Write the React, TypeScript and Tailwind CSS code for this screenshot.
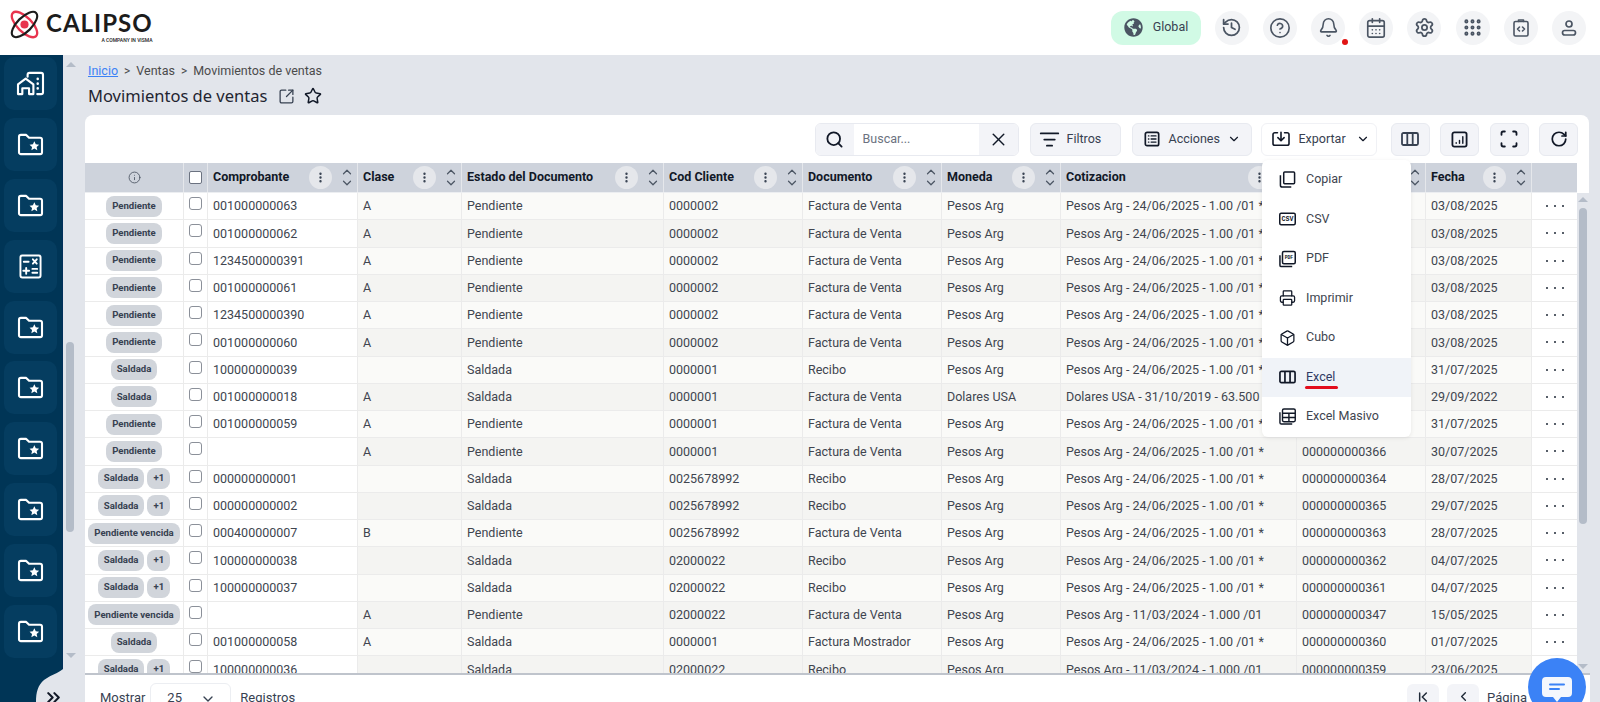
import { ReactNode } from "react";
import {
  Box,
  Bell,
  CalendarDays,
  ChevronDown,
  ChevronFirst,
  ChevronLeft,
  ChevronsRight,
  ChevronUp,
  CircleHelp,
  EllipsisVertical,
  Grip,
  History,
  Info,
  ListFilter,
  Printer,
  RotateCw,
  Scan,
  Search,
  Settings,
  SquareArrowOutUpRight,
  Star,
  X,
} from "lucide-react";
import { FaGlobeAmericas } from "react-icons/fa";

const FONT = "font-['Roboto','Liberation_Sans',sans-serif]";

interface Row {
  estados: string[];
  comprobante: string;
  clase: string;
  estado: string;
  cliente: string;
  documento: string;
  moneda: string;
  cotizacion: string;
  numero: string;
  fecha: string;
}

const PESOS = "Pesos Arg - 24/06/2025 - 1.00 /01 *";
const PESOS_2024 = "Pesos Arg - 11/03/2024 - 1.000 /01";
const FV = "Factura de Venta";

// la columna numero de las primeras filas queda tapada por el menu de exportar
const ROWS: Row[] = [
  { estados: ["Pendiente"], comprobante: "001000000063", clase: "A", estado: "Pendiente", cliente: "0000002", documento: FV, moneda: "Pesos Arg", cotizacion: PESOS, numero: "", fecha: "03/08/2025" },
  { estados: ["Pendiente"], comprobante: "001000000062", clase: "A", estado: "Pendiente", cliente: "0000002", documento: FV, moneda: "Pesos Arg", cotizacion: PESOS, numero: "", fecha: "03/08/2025" },
  { estados: ["Pendiente"], comprobante: "1234500000391", clase: "A", estado: "Pendiente", cliente: "0000002", documento: FV, moneda: "Pesos Arg", cotizacion: PESOS, numero: "", fecha: "03/08/2025" },
  { estados: ["Pendiente"], comprobante: "001000000061", clase: "A", estado: "Pendiente", cliente: "0000002", documento: FV, moneda: "Pesos Arg", cotizacion: PESOS, numero: "", fecha: "03/08/2025" },
  { estados: ["Pendiente"], comprobante: "1234500000390", clase: "A", estado: "Pendiente", cliente: "0000002", documento: FV, moneda: "Pesos Arg", cotizacion: PESOS, numero: "", fecha: "03/08/2025" },
  { estados: ["Pendiente"], comprobante: "001000000060", clase: "A", estado: "Pendiente", cliente: "0000002", documento: FV, moneda: "Pesos Arg", cotizacion: PESOS, numero: "", fecha: "03/08/2025" },
  { estados: ["Saldada"], comprobante: "100000000039", clase: "", estado: "Saldada", cliente: "0000001", documento: "Recibo", moneda: "Pesos Arg", cotizacion: PESOS, numero: "", fecha: "31/07/2025" },
  { estados: ["Saldada"], comprobante: "001000000018", clase: "A", estado: "Saldada", cliente: "0000001", documento: FV, moneda: "Dolares USA", cotizacion: "Dolares USA - 31/10/2019 - 63.500 /01 *", numero: "", fecha: "29/09/2022" },
  { estados: ["Pendiente"], comprobante: "001000000059", clase: "A", estado: "Pendiente", cliente: "0000001", documento: FV, moneda: "Pesos Arg", cotizacion: PESOS, numero: "", fecha: "31/07/2025" },
  { estados: ["Pendiente"], comprobante: "", clase: "A", estado: "Pendiente", cliente: "0000001", documento: FV, moneda: "Pesos Arg", cotizacion: PESOS, numero: "000000000366", fecha: "30/07/2025" },
  { estados: ["Saldada", "+1"], comprobante: "000000000001", clase: "", estado: "Saldada", cliente: "0025678992", documento: "Recibo", moneda: "Pesos Arg", cotizacion: PESOS, numero: "000000000364", fecha: "28/07/2025" },
  { estados: ["Saldada", "+1"], comprobante: "000000000002", clase: "", estado: "Saldada", cliente: "0025678992", documento: "Recibo", moneda: "Pesos Arg", cotizacion: PESOS, numero: "000000000365", fecha: "29/07/2025" },
  { estados: ["Pendiente vencida"], comprobante: "000400000007", clase: "B", estado: "Pendiente", cliente: "0025678992", documento: FV, moneda: "Pesos Arg", cotizacion: PESOS, numero: "000000000363", fecha: "28/07/2025" },
  { estados: ["Saldada", "+1"], comprobante: "100000000038", clase: "", estado: "Saldada", cliente: "02000022", documento: "Recibo", moneda: "Pesos Arg", cotizacion: PESOS, numero: "000000000362", fecha: "04/07/2025" },
  { estados: ["Saldada", "+1"], comprobante: "100000000037", clase: "", estado: "Saldada", cliente: "02000022", documento: "Recibo", moneda: "Pesos Arg", cotizacion: PESOS, numero: "000000000361", fecha: "04/07/2025" },
  { estados: ["Pendiente vencida"], comprobante: "", clase: "A", estado: "Pendiente", cliente: "02000022", documento: FV, moneda: "Pesos Arg", cotizacion: PESOS_2024, numero: "000000000347", fecha: "15/05/2025" },
  { estados: ["Saldada"], comprobante: "001000000058", clase: "A", estado: "Saldada", cliente: "0000001", documento: "Factura Mostrador", moneda: "Pesos Arg", cotizacion: PESOS, numero: "000000000360", fecha: "01/07/2025" },
  { estados: ["Saldada", "+1"], comprobante: "100000000036", clase: "", estado: "Saldada", cliente: "02000022", documento: "Recibo", moneda: "Pesos Arg", cotizacion: PESOS_2024, numero: "000000000359", fecha: "23/06/2025" },
];

function Logo() {
  return (
    <div className="flex items-start pl-[10px]">
      <svg viewBox="0 0 30 30" className="w-[29px] h-[29px] mt-[-1px]" fill="none">
        <ellipse cx="15" cy="15" rx="17" ry="7.5" transform="rotate(45 15 15)" stroke="#e8344e" strokeWidth="2.4" />
        <ellipse cx="15" cy="15" rx="17" ry="7.5" transform="rotate(-45 15 15)" stroke="#1c1c1c" strokeWidth="2.2" />
        <circle cx="15" cy="15" r="4.2" fill="#e8344e" />
      </svg>
      <div className="ml-[7px] flex flex-col items-end">
        <span className="font-['Lato',sans-serif] font-bold text-[24px] leading-[24px] tracking-[1px] text-[#1c1c1c]">CALIPSO</span>
        <span className="font-['Roboto',sans-serif] text-[5px] leading-[7px] font-medium text-[#222] mt-[2px]">A COMPANY IN VISMA</span>
      </div>
    </div>
  );
}

function RoundBtn({ children, dot }: { children: ReactNode; dot?: boolean }) {
  return (
    <div className="relative w-[34px] h-[34px] rounded-full bg-[#f3f4f6] flex items-center justify-center text-[#4b5563]">
      {children}
      {dot && <span className="absolute right-[-3px] bottom-0 w-[6px] h-[6px] rounded-full bg-[#e11414]" />}
    </div>
  );
}

function Header() {
  return (
    <header className="h-[55px] shrink-0 bg-white flex items-center justify-between pr-[14px]">
      <Logo />
      <div className="flex items-center">
        <div className="w-[90px] h-[34px] rounded-xl bg-[#d1fae5] flex items-center pl-[13px] gap-[10px] text-[12.5px] text-[#374151] mr-[14px]">
          <FaGlobeAmericas className="w-[19px] h-[19px] text-[#4b5563]" />
          Global
        </div>
        <div className="flex gap-[14.2px]">
          <RoundBtn><History className="w-[21px] h-[21px]" strokeWidth={2} /></RoundBtn>
          <RoundBtn><CircleHelp className="w-[22px] h-[22px]" strokeWidth={1.8} /></RoundBtn>
          <RoundBtn dot><Bell className="w-[21px] h-[21px]" strokeWidth={1.8} /></RoundBtn>
          <RoundBtn><CalendarDays className="w-[22px] h-[22px]" strokeWidth={1.8} /></RoundBtn>
          <RoundBtn><Settings className="w-[21px] h-[21px]" strokeWidth={2} /></RoundBtn>
          <RoundBtn>
            <Grip className="w-[21px] h-[21px]" strokeWidth={2.6} />
          </RoundBtn>
          <RoundBtn>
            <svg viewBox="0 0 20 20" className="w-[20px] h-[20px]" fill="none" stroke="currentColor" strokeWidth="1.6" strokeLinejoin="round" strokeLinecap="round">
              <rect x="3" y="3.5" width="14" height="14.5" rx="1.5" />
              <path d="M7.5 3.5V2h5v1.5M8.5 9l-2 2 2 2M11.5 9l2 2-2 2" />
            </svg>
          </RoundBtn>
          <RoundBtn>
            <svg viewBox="0 0 20 20" className="w-[20px] h-[20px]" fill="none" stroke="currentColor" strokeWidth="1.7">
              <circle cx="10" cy="6" r="3" />
              <rect x="3.5" y="12.5" width="13" height="4.5" rx="2.25" />
            </svg>
          </RoundBtn>
        </div>
      </div>
    </header>
  );
}

function FolderStar() {
  return (
    <svg viewBox="0 0 28 24" className="w-[27px] h-[23px]" fill="none" stroke="white" strokeWidth="2.2" strokeLinejoin="round">
      <path d="M2 4a2 2 0 0 1 2-2h5.5l3 3H24a2 2 0 0 1 2 2v13a2 2 0 0 1-2 2H4a2 2 0 0 1-2-2z" />
      <path d="M18 8.500l1.500 3.300 3.500.4-2.600 2.400.7 3.500-3.100-1.800-3.100 1.800.7-3.500-2.600-2.400 3.500-.4z" fill="white" stroke="none" />
    </svg>
  );
}

function HomeIcon() {
  return (
    <svg viewBox="0 0 30 26" className="w-[29px] h-[25px]" fill="none" stroke="white" strokeWidth="2.2" strokeLinecap="round" strokeLinejoin="round">
      <path d="M2 24V14l8-6 8 6v10h-4.500v-6h-7v6z" />
      <path d="M12 6V4a2 2 0 0 1 2-2h12a2 2 0 0 1 2 2v18a2 2 0 0 1-2 2h-4" />
      <path d="M22.500 8v.2M22.500 13v.2M22.500 18v.2" strokeWidth="2.600" />
    </svg>
  );
}

function CalcIcon() {
  return (
    <svg viewBox="0 0 24 26" className="w-[23px] h-[25px]" fill="none" stroke="white" strokeWidth="2" strokeLinecap="round">
      <rect x="1.500" y="1.500" width="21" height="23" rx="2" />
      <path d="M5 8h5M14.500 5.500l4 4.500M18.500 5.500l-4 4.500M7.500 14.500v6M4.500 17.500h6M14 15.500h5M14 19.500h5" />
    </svg>
  );
}

function Tile({ children }: { children: ReactNode }) {
  return <div className="w-[53px] h-[53px] shrink-0 rounded-[10px] bg-[#053d60] flex items-center justify-center">{children}</div>;
}

function Sidebar() {
  return (
    <aside className="w-[63px] shrink-0 bg-[#003556] border-r-[1px] border-[#02305a] flex flex-col gap-[7.900px] items-center pt-[2px] pr-[1px] overflow-hidden">
      <Tile><HomeIcon /></Tile>
      <Tile><FolderStar /></Tile>
      <Tile><FolderStar /></Tile>
      <Tile><CalcIcon /></Tile>
      <Tile><FolderStar /></Tile>
      <Tile><FolderStar /></Tile>
      <Tile><FolderStar /></Tile>
      <Tile><FolderStar /></Tile>
      <Tile><FolderStar /></Tile>
      <Tile><FolderStar /></Tile>
    </aside>
  );
}

function ToolBtn({ className, children }: { className: string; children: ReactNode }) {
  return (
    <div className={`h-[33px] rounded-md border border-[#e8eaf0] bg-[#f3f4f8] flex items-center text-[12.5px] text-[#374151] ${className}`}>
      {children}
    </div>
  );
}

function ListIcon() {
  return (
    <svg viewBox="0 0 18 18" className="w-[16px] h-[16px]" fill="none" stroke="#111827" strokeWidth="1.900" strokeLinecap="round">
      <rect x="1.500" y="1.500" width="15" height="15" rx="2" />
      <path d="M5 5.500h.5M8 5.500h5.500M5 9h.5M8 9h5.500M5 12.500h.5M8 12.500h5.500" strokeWidth="1.500" />
    </svg>
  );
}

function ExportIcon() {
  return (
    <svg viewBox="0 0 20 18" className="w-[18px] h-[16px]" fill="none" stroke="#111827" strokeWidth="1.800" strokeLinecap="round" strokeLinejoin="round">
      <path d="M6 2H3a2 2 0 0 0-2 2v10a2 2 0 0 0 2 2h14a2 2 0 0 0 2-2V4a2 2 0 0 0-2-2h-3" />
      <path d="M10 1.500v9M6.500 7.500l3.500 3.500 3.500-3.500" />
    </svg>
  );
}

function ColumnsIcon() {
  return (
    <svg viewBox="0 0 18 14" className="w-[18px] h-[14px]" fill="none" stroke="currentColor" strokeWidth="1.800" strokeLinejoin="round">
      <rect x="1" y="1" width="16" height="12" rx="1.500" />
      <path d="M6.300 1v12M11.700 1v12" />
    </svg>
  );
}

function Toolbar() {
  return (
    <div className="h-[48px] shrink-0 flex items-center justify-end pr-[11px] text-[#111827]">
      <div className="flex items-center h-[33px] w-[204px] rounded-md border border-[#e8eaf0] overflow-hidden mr-[11px]">
        <div className="w-[38px] h-full bg-[#f3f4f8] flex items-center justify-center">
          <Search className="w-[19px] h-[19px]" strokeWidth={2.3} />
        </div>
        <div className="flex-1 pl-[9px] text-[12.5px] text-[#6b7280]">Buscar...</div>
        <div className="w-[39px] h-full bg-[#f3f4f8] flex items-center justify-center">
          <X className="w-[21px] h-[21px]" strokeWidth={1.700} />
        </div>
      </div>
      <ToolBtn className="w-[91px] pl-[8px] gap-[7px] mr-[11px]">
        <ListFilter className="w-[21px] h-[21px] text-[#111827]" strokeWidth={2} />
        Filtros
      </ToolBtn>
      <ToolBtn className="w-[120px] pl-[11px] gap-[9px] mr-[9px]">
        <ListIcon />
        Acciones
        <ChevronDown className="w-[14px] h-[14px] -ml-[2px] text-[#111827]" strokeWidth={2} />
      </ToolBtn>
      <div className="h-[33px] w-[116px] rounded-md border border-[#f0f1f5] bg-white flex items-center pl-[10px] gap-[9px] text-[12.5px] text-[#374151] mr-[14px]">
        <ExportIcon />
        Exportar
        <ChevronDown className="w-[14px] h-[14px] ml-[1px] text-[#111827]" strokeWidth={2} />
      </div>
      <div className="flex gap-[10.500px]">
        <ToolBtn className="w-[39px] justify-center text-[#111827]"><ColumnsIcon /></ToolBtn>
        <ToolBtn className="w-[39px] justify-center">
          <svg viewBox="0 0 18 18" className="w-[17px] h-[17px]" fill="none" stroke="#111827" strokeWidth="1.900" strokeLinecap="round">
            <rect x="1.500" y="1.500" width="15" height="15" rx="2" />
            <path d="M5.500 13v-.5M9 13v-3M12.500 13V6" strokeWidth="1.500" />
          </svg>
        </ToolBtn>
        <ToolBtn className="w-[39px] justify-center"><Scan className="w-[20px] h-[20px] text-[#111827]" strokeWidth={2.200} /></ToolBtn>
        <ToolBtn className="w-[39px] justify-center"><RotateCw className="w-[18px] h-[18px] text-[#111827]" strokeWidth={2.300} /></ToolBtn>
      </div>
    </div>
  );
}

function HeadCell({ title, className }: { title: string; className: string }) {
  return (
    <div className={`h-full flex items-center pl-[5px] pr-[3px] border-r border-[#e5e7eb] text-[12.5px] font-bold text-[#111827] ${className}`}>
      <span className="flex-1 truncate">{title}</span>
      <span className="w-[23px] h-[23px] rounded-full bg-[#e5e7eb] flex items-center justify-center mr-[8px] shrink-0">
        <EllipsisVertical className="w-[13px] h-[13px] text-[#374151]" strokeWidth={2.400} />
      </span>
      <span className="flex flex-col items-center text-[#4b5563] shrink-0">
        <ChevronUp className="w-[14px] h-[14px] -mb-[3px]" strokeWidth={2.100} />
        <ChevronDown className="w-[14px] h-[14px]" strokeWidth={2.100} />
      </span>
    </div>
  );
}

function TableHead() {
  return (
    <div className="flex h-[30px] shrink-0 mr-[12px] bg-[#ced3dc] border-b border-[#eceef1]">
      <div className="w-[99px] h-full border-r border-[#e5e7eb] flex items-center justify-center">
        <Info className="w-[13px] h-[13px] text-[#4b5563]" strokeWidth={1.600} />
      </div>
      <div className="w-[24px] h-full border-r border-[#e5e7eb] flex items-center justify-center">
        <span className="w-[13px] h-[13px] rounded-[2px] border border-[#6b7280] bg-white" />
      </div>
      <HeadCell title="Comprobante" className="w-[150px]" />
      <HeadCell title="Clase" className="w-[104px]" />
      <HeadCell title="Estado del Documento" className="w-[202px]" />
      <HeadCell title="Cod Cliente" className="w-[139px]" />
      <HeadCell title="Documento" className="w-[139px]" />
      <HeadCell title="Moneda" className="w-[119px]" />
      <HeadCell title="Cotizacion" className="w-[236px]" />
      <HeadCell title="" className="w-[129px]" />
      <HeadCell title="Fecha" className="w-[106px]" />
      <div className="flex-1" />
    </div>
  );
}

function Badge({ text }: { text: string }) {
  return (
    <span className="h-[21px] rounded-lg bg-[#d1d5db] px-[6px] flex items-center text-[9.600px] font-bold text-[#374151] whitespace-nowrap">
      {text}
    </span>
  );
}

function Cell({ className, shade, children }: { className: string; shade: string; children?: ReactNode }) {
  return (
    <div className={`h-full flex items-center pl-[5px] pt-[1px] border-r border-[#ebebeb] whitespace-nowrap overflow-hidden ${shade} ${className}`}>
      {children}
    </div>
  );
}

function RowDots() {
  return (
    <div className="flex-1 flex items-center justify-center gap-[6px]">
      <span className="w-[2px] h-[2px] rounded-full bg-[#1f2937]" />
      <span className="w-[2px] h-[2px] rounded-full bg-[#1f2937]" />
      <span className="w-[2px] h-[2px] rounded-full bg-[#1f2937]" />
    </div>
  );
}

function TableRow({ row, index }: { row: Row; index: number }) {
  const shade = index % 2 === 0 ? "bg-[#fafaf8]" : "bg-[#f4f4f2]";
  return (
    <div className="flex h-[27.250px] shrink-0 border-b border-[#ebebeb] text-[12.5px] text-[#40454f] bg-white">
      <div className="w-[99px] h-full border-r border-[#ebebeb] flex items-center justify-center gap-[3px]">
        {row.estados.map((e) => <Badge key={e} text={e} />)}
      </div>
      <div className="w-[24px] h-full border-r border-[#ebebeb] flex justify-center pt-[4px]">
        <span className="w-[13px] h-[13px] rounded-[3px] border border-[#8b9099] bg-white" />
      </div>
      <Cell className="w-[150px]" shade="bg-white">{row.comprobante}</Cell>
      <Cell className="w-[104px]" shade={shade}>{row.clase}</Cell>
      <Cell className="w-[202px]" shade={shade}>{row.estado}</Cell>
      <Cell className="w-[139px]" shade={shade}>{row.cliente}</Cell>
      <Cell className="w-[139px]" shade={shade}>{row.documento}</Cell>
      <Cell className="w-[119px]" shade={shade}>{row.moneda}</Cell>
      <Cell className="w-[236px]" shade={shade}>{row.cotizacion}</Cell>
      <Cell className="w-[129px]" shade={shade}>{row.numero}</Cell>
      <Cell className="w-[106px]" shade={shade}>{row.fecha}</Cell>
      <RowDots />
    </div>
  );
}

function MenuItem({ label, icon, active }: { label: string; icon: ReactNode; active?: boolean }) {
  return (
    <div className={`relative h-[39.500px] flex items-center pl-[17px] gap-[10px] text-[12.5px] ${active ? "bg-[#f0f3f8] text-[#2f3a63]" : "text-[#40454f]"}`}>
      <span className="w-[17px] h-[17px] flex items-center justify-center text-[#111827]">{icon}</span>
      {label}
      {active && <span className="absolute left-[43px] bottom-[8px] w-[33px] h-[3px] rounded-full bg-[#e30d1d]" />}
    </div>
  );
}

function FileTagIcon({ tag, stacked }: { tag: string; stacked?: boolean }) {
  return (
    <svg viewBox="0 0 18 18" className="w-[18px] h-[18px]" fill="none" stroke="currentColor" strokeWidth="1.600">
      {stacked && <path d="M1 5v10.500A1.500 1.500 0 0 0 2.500 17H14" />}
      <rect x={stacked ? 3.7 : 0.8} y={stacked ? 1 : 3} width={stacked ? 13.5 : 16.4} height={stacked ? 13 : 12} rx="1.500" />
      <text x={stacked ? 10.5 : 9} y={stacked ? 9.5 : 11.5} textAnchor="middle" fontSize={stacked ? 5 : 7} fontWeight="700" fill="currentColor" stroke="none" fontFamily="Liberation Mono, monospace">{tag}</text>
    </svg>
  );
}

function ExportMenu() {
  return (
    <div className="absolute left-[1177px] top-[45px] w-[149px] h-[276.500px] bg-white rounded-md shadow-[0_1px_4px_rgba(0,0,0,0.08)] overflow-hidden z-10">
      <MenuItem
        label="Copiar"
        icon={
          <svg viewBox="0 0 18 18" className="w-[17px] h-[17px]" fill="none" stroke="currentColor" strokeWidth="1.600" strokeLinejoin="round">
            <rect x="5" y="1" width="11.500" height="12.500" rx="1" />
            <path d="M1.500 4.500V15a2 2 0 0 0 2 2H13" />
          </svg>
        }
      />
      <MenuItem label="CSV" icon={<FileTagIcon tag="CSV" />} />
      <MenuItem label="PDF" icon={<FileTagIcon tag="PDF" stacked />} />
      <MenuItem label="Imprimir" icon={<Printer className="w-[20px] h-[20px]" strokeWidth={1.800} />} />
      <MenuItem label="Cubo" icon={<Box className="w-[20px] h-[20px]" strokeWidth={1.800} />} />
      <MenuItem label="Excel" active icon={<ColumnsIcon />} />
      <MenuItem
        label="Excel Masivo"
        icon={
          <svg viewBox="0 0 18 18" className="w-[17px] h-[17px]" fill="none" stroke="currentColor" strokeWidth="1.500">
            <path d="M1 4.500V15.500A1.500 1.500 0 0 0 2.500 17H14" />
            <rect x="3.700" y="1" width="13.500" height="13.500" rx="1.500" />
            <path d="M3.700 5.500h13.500M3.700 10h13.500M10.500 5.500v9" />
          </svg>
        }
      />
    </div>
  );
}

function Footer() {
  return (
    <div className="h-[29px] shrink-0 bg-white border-t-2 border-[#bfc4cc] flex items-start text-[13px] text-[#374151] pl-[15px] pt-[8px] -mr-[1px] overflow-hidden">
      <span className="mt-[5px]">Mostrar</span>
      <div className="ml-[5px] w-[81px] h-[30px] rounded-md border border-[#eceef2] flex items-start pt-[4px] justify-between pl-[16px] pr-[14px] shrink-0">
        25
        <ChevronDown className="w-[16px] h-[16px] mt-[3px] text-[#374151]" strokeWidth={2} />
      </div>
      <span className="ml-[9px] mt-[5px]">Registros</span>
      <div className="ml-auto flex items-start gap-[8px] pr-[63px] pt-[1px]">
        <div className="w-[32px] h-[30px] rounded-md bg-[#f3f4f8] flex justify-center pt-[5px]">
          <ChevronFirst className="w-[16px] h-[16px] text-[#1f2937]" strokeWidth={2.200} />
        </div>
        <div className="w-[32px] h-[30px] rounded-md bg-[#f3f4f8] flex justify-center pt-[5px]">
          <ChevronLeft className="w-[15px] h-[15px] text-[#1f2937]" strokeWidth={2.200} />
        </div>
        <span className="mt-[4px]">Página</span>
      </div>
    </div>
  );
}

function ChatBubble() {
  return (
    <div className="absolute right-[14px] top-[603px] w-[58px] h-[58px] rounded-full bg-[#3b82f6] flex items-center justify-center pt-[5px] z-20">
      <svg viewBox="0 0 32 28" className="w-[32px] h-[28px]">
        <path d="M5 1h22a4 4 0 0 1 4 4v12a4 4 0 0 1-4 4h-7l-4 5-4-5H5a4 4 0 0 1-4-4V5a4 4 0 0 1 4-4z" fill="#f4f7fd" />
        <path d="M9 8.500h14M9 13h9" stroke="#3b82f6" strokeWidth="2" strokeLinecap="round" />
      </svg>
    </div>
  );
}

export default function App() {
  return (
    <div className={`h-screen w-full flex flex-col overflow-hidden bg-white ${FONT}`}>
      <Header />
      <div className="relative flex-1 flex min-h-0 bg-[#e2e5eb]">
        <Sidebar />
        {/* scroll de la pagina */}
        <div className="w-[22px] shrink-0 relative">
          <span className="absolute left-[3px] top-[7px] w-0 h-0 border-x-[5px] border-x-transparent border-b-[5px] border-b-[#b4bcc8]" />
          <span className="absolute left-[3px] top-[287px] w-[8px] h-[190px] rounded-full bg-[#b4bcc8]" />
          <span className="absolute left-[3px] top-[598px] w-0 h-0 border-x-[5px] border-x-transparent border-t-[5px] border-t-[#b4bcc8]" />
        </div>
        <main className="flex-1 min-w-0 flex flex-col pr-[11px]">
          <div className="h-[60px] shrink-0 pl-[3px] pt-[6px]">
            <div className="flex items-center text-[12.5px] leading-[20px] text-[#4b4b4b]">
              <span className="text-[#3b82f6] underline">Inicio</span>
              <span className="mx-[6px] text-[12px]">&gt;</span>
              <span>Ventas</span>
              <span className="mx-[6px] text-[12px]">&gt;</span>
              <span>Movimientos de ventas</span>
            </div>
            <div className="flex items-center mt-[2px] h-[26px]">
              <span className="font-['Noto_Sans',sans-serif] text-[16.500px] text-[#1f2430]">Movimientos de ventas</span>
              <SquareArrowOutUpRight className="w-[17px] h-[17px] ml-[11px] text-[#374151]" strokeWidth={1.800} />
              <Star className="w-[18px] h-[18px] ml-[9px] text-[#111827]" strokeWidth={2} />
            </div>
          </div>
          <div className="relative flex-1 min-h-0 flex flex-col bg-white rounded-t-lg">
            <Toolbar />
            <TableHead />
            <div className="relative flex-1 min-h-0 flex">
              <div className="flex-1 min-w-0 overflow-hidden">
                {ROWS.map((row, i) => <TableRow key={i} row={row} index={i} />)}
              </div>
              <div className="relative w-[12px] shrink-0 bg-[#e2e5eb]">
                <span className="absolute left-[1px] top-[4px] w-0 h-0 border-x-[5px] border-x-transparent border-b-[5px] border-b-[#b4bcc8]" />
                <span className="absolute left-[2px] top-[15px] w-[8px] h-[316px] rounded-full bg-[#b4bcc8]" />
                <span className="absolute left-[1px] bottom-[4px] w-0 h-0 border-x-[5px] border-x-transparent border-t-[5px] border-t-[#b4bcc8]" />
              </div>
            </div>
            <Footer />
            <ExportMenu />
          </div>
        </main>
        {/* boton de expandir el menu */}
        <svg viewBox="0 0 30 37" className="absolute left-[36px] top-[610px] w-[30px] h-[37px]">
          <path d="M30 0C27 7 16 9 8 15C2 20 0 27 0 37H30Z" fill="#e2e5eb" />
        </svg>
        <ChevronsRight className="absolute left-[43px] top-[632px] w-[21px] h-[21px] text-[#111827]" strokeWidth={2.400} />
        <ChatBubble />
      </div>
    </div>
  );
}
